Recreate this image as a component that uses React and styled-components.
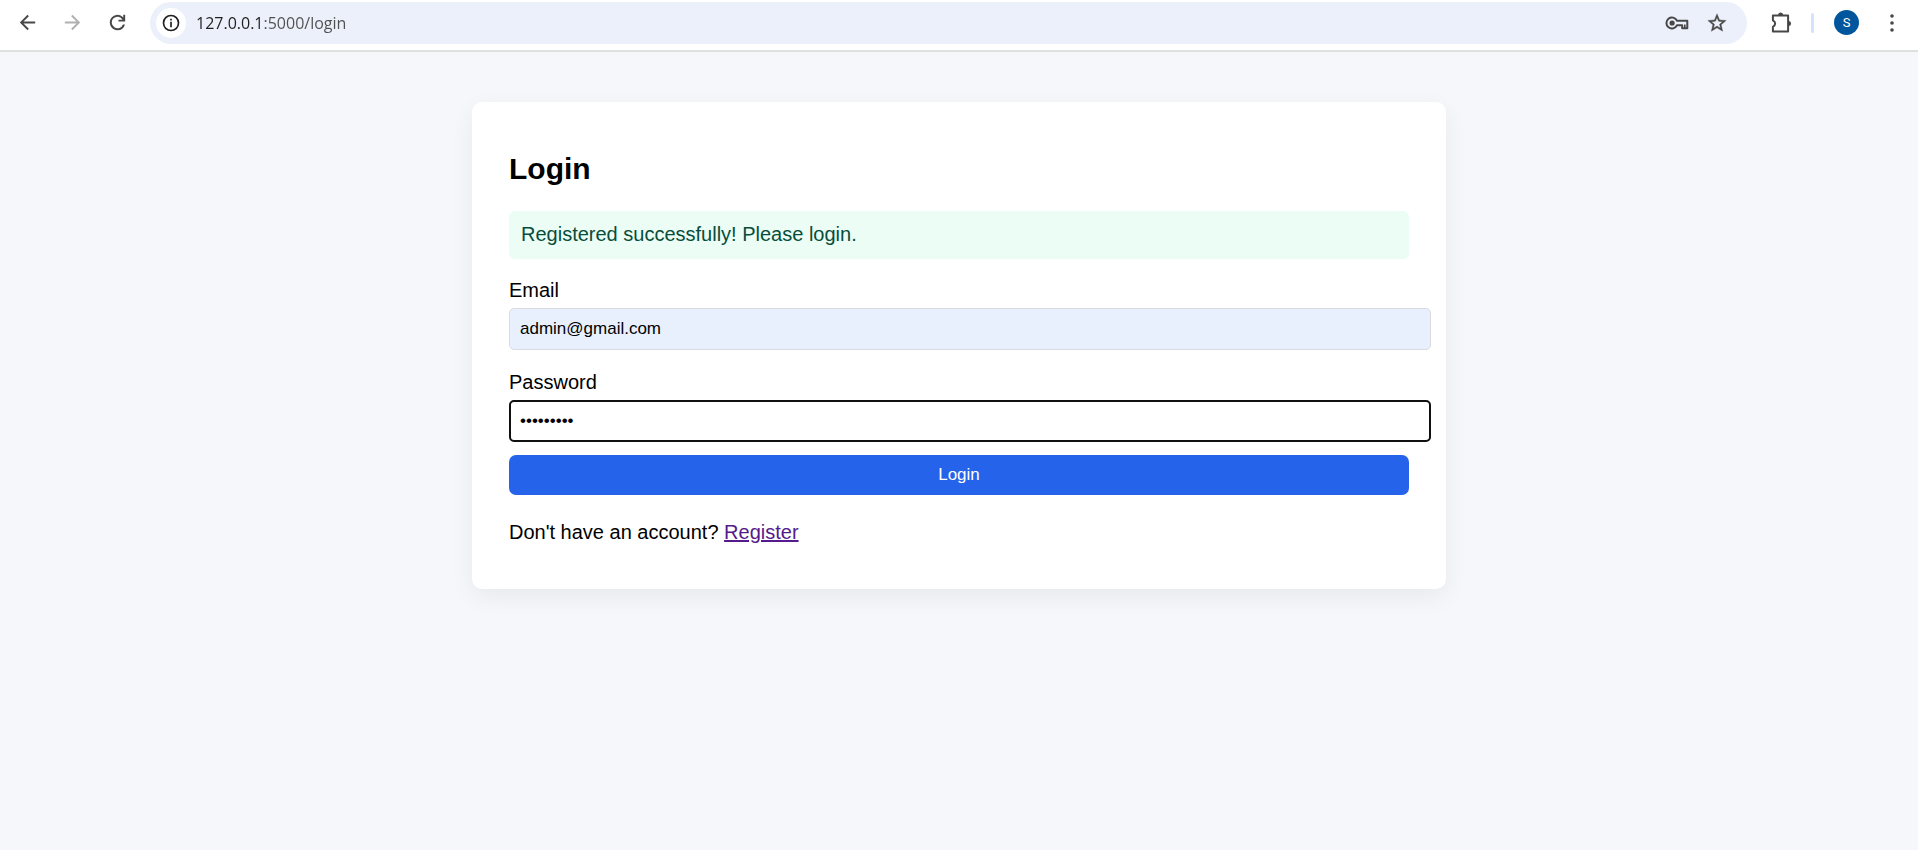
import React from "react";
import styled, { createGlobalStyle } from "styled-components";

const GlobalStyle = createGlobalStyle`
  body {
    margin: 0;
    background: #f5f7fb;
    color: #000;
    font-family: "Liberation Sans", Arial, sans-serif;
    font-size: 20px;
    line-height: 24px;
  }
`;

const Toolbar = styled.header`
  display: flex;
  align-items: center;
  height: 43px;
  padding: 1px 4px 6px 5px;
  border-bottom: 2px solid #dfe1de;
  background: #fff;
`;

const IconButton = styled.button`
  display: flex;
  flex: none;
  align-items: center;
  justify-content: center;
  width: ${({ $width }) => $width || 45}px;
  height: 40px;
  padding: 0;
  border: 0;
  background: none;
  color: ${({ $muted }) => ($muted ? "#b0b0b0" : "#474747")};
`;

const AddressBar = styled.div`
  display: flex;
  flex: 1;
  align-items: center;
  height: 42px;
  margin: 0 11px 0 10px;
  padding: 0 10px 0 6px;
  border-radius: 21px;
  background: #ecf0fa;
`;

const SiteInfo = styled.button`
  display: flex;
  align-items: center;
  justify-content: center;
  width: 30px;
  height: 30px;
  margin-right: 10px;
  padding: 0;
  border: 0;
  border-radius: 50%;
  background: #fff;
  color: #1f1f1f;
`;

const Address = styled.input`
  flex: 1;
  min-width: 0;
  padding: 0;
  border: 0;
  outline: 0;
  background: linear-gradient(to right, #1f1f1f 67px, #505050 67px);
  background-clip: text;
  color: transparent;
  font: 16px/30px "Open Sans", "Noto Sans", sans-serif;
`;

const Divider = styled.span`
  width: 3px;
  height: 20px;
  margin: 0 20px 0 8px;
  border-radius: 2px;
  background: #d3e3fd;
`;

const Avatar = styled.button`
  width: 25px;
  height: 25px;
  margin-right: 10px;
  padding: 0;
  border: 0;
  border-radius: 50%;
  background: #00569c;
  color: #fff;
  font: 13px/25px Roboto, sans-serif;
`;

const Card = styled.main`
  box-sizing: border-box;
  max-width: 974px;
  margin: 50px auto;
  padding: 25px 37px;
  border-radius: 10px;
  background: #fff;
  box-shadow: 0 8px 25px rgba(0, 0, 0, 0.06);
`;

const Title = styled.h2`
  margin: 25px 0;
  font-size: 30px;
  line-height: 34px;
`;

const Notice = styled.p`
  margin: 0 0 19px;
  padding: 11px 12px 13px;
  border-radius: 6px;
  background: #ecfdf5;
  color: #064e3b;
`;

const Field = styled.div`
  & + & {
    margin-top: 20px;
  }
`;

const Label = styled.label`
  display: block;
  margin-bottom: 6px;
`;

const TextInput = styled.input`
  display: block;
  width: 100%;
  height: 20px;
  padding: 10px;
  border: 1px solid #d8dbe2;
  border-radius: 5px;
  outline: ${({ $active }) => ($active ? "2px solid #101010" : "0")};
  outline-offset: -2px;
  background: ${({ $filled }) => ($filled ? "#e8f0fe" : "#fff")};
  color: #000;
  font: 17px/20px "Liberation Sans", Arial, sans-serif;
`;

const SubmitButton = styled.button`
  display: block;
  width: 100%;
  height: 40px;
  margin-top: 13px;
  padding: 0;
  border: 0;
  border-radius: 7px;
  background: #2563eb;
  color: #fff;
  font: 17px/20px "Liberation Sans", Arial, sans-serif;
`;

const Footnote = styled.p`
  margin: 25px 0 20px;
`;

const RegisterLink = styled.a`
  color: #551a8b;
`;

function Icon({ size = 23, children }) {
  return (
    <svg width={size} height={size} viewBox="0 0 24 24" fill="currentColor" aria-hidden="true">
      {children}
    </svg>
  );
}

function BrowserToolbar() {
  return (
    <Toolbar>
      <IconButton type="button" aria-label="Back">
        <Icon><path d="M20 11H7.83l5.59-5.59L12 4l-8 8 8 8 1.41-1.41L7.83 13H20z" /></Icon>
      </IconButton>
      <IconButton type="button" aria-label="Forward" $muted>
        <Icon><path d="M4 11h12.17l-5.59-5.59L12 4l8 8-8 8-1.41-1.41L16.17 13H4z" /></Icon>
      </IconButton>
      <IconButton type="button" aria-label="Reload">
        <Icon>
          <path d="M12 20a8 8 0 1 1 6-13.25V4h2v7h-7V9h4.2A6 6 0 1 0 17.66 14h2.1A8 8 0 0 1 12 20z" />
        </Icon>
      </IconButton>
      <AddressBar>
        <SiteInfo type="button" aria-label="View site information">
          <Icon size={20}>
            <path d="M11 10.5h2V17h-2zM11 7h2v2h-2zM12 2a10 10 0 1 0 0 20 10 10 0 0 0 0-20zm0 18a8 8 0 1 1 0-16 8 8 0 0 1 0 16z" />
          </Icon>
        </SiteInfo>
        <Address type="text" aria-label="Address" defaultValue="127.0.0.1:5000/login" spellCheck={false} />
        <IconButton type="button" aria-label="Manage passwords" $width={40}>
          <Icon size={24}>
            <path
              d="M11.9 9.7A5.5 5.5 0 1 0 11.9 14.3H17.2V17.2H22.3V9.7z"
              fill="none"
              stroke="currentColor"
              strokeWidth="2"
              strokeLinejoin="round"
            />
            <path d="M19 13.5h1.6V17H19z" />
            <circle cx="7.1" cy="12" r="2.6" />
          </Icon>
        </IconButton>
        <IconButton type="button" aria-label="Bookmark this tab" $width={40}>
          <Icon size={22}>
            <path
              d="M22 9.24l-7.19-.62L12 2 9.19 8.63 2 9.24l5.46 4.73L5.82 21 12 17.27 18.18 21l-1.63-7.03zM12 15.4l-3.76 2.27 1-4.28-3.32-2.88 4.38-.38L12 6.1l1.71 4.04 4.38.38-3.32 2.88 1 4.28z"
              stroke="currentColor"
              strokeWidth="0.4"
            />
          </Icon>
        </IconButton>
      </AddressBar>
      <IconButton type="button" aria-label="Extensions">
        <Icon size={24}>
          <path
            d="M3.9 4.6h15.2v15.8H3.9v-4.6c3-1.4 3-5 0-6.4z"
            fill="none"
            stroke="currentColor"
            strokeWidth="2"
            strokeLinejoin="round"
          />
          <path d="M9.2 4a2.5 2.5 0 0 1 5 0zM19.5 10a2.5 2.5 0 0 1 0 5z" />
        </Icon>
      </IconButton>
      <Divider />
      <Avatar type="button" aria-label="Profile S">S</Avatar>
      <IconButton type="button" aria-label="Browser menu">
        <Icon size={24}>
          <circle cx="12" cy="5" r="1.8" />
          <circle cx="12" cy="12" r="1.8" />
          <circle cx="12" cy="19" r="1.8" />
        </Icon>
      </IconButton>
    </Toolbar>
  );
}

export default function App() {
  return (
    <>
      <GlobalStyle />
      <BrowserToolbar />
      <Card>
        <Title>Login</Title>
        <Notice role="status">Registered successfully! Please login.</Notice>
        <form onSubmit={(event) => event.preventDefault()}>
          <Field>
            <Label htmlFor="email">Email</Label>
            <TextInput id="email" type="email" defaultValue="admin@gmail.com" $filled />
          </Field>
          <Field>
            <Label htmlFor="password">Password</Label>
            <TextInput id="password" type="password" defaultValue="admin1234" $active />
          </Field>
          <SubmitButton type="submit">Login</SubmitButton>
        </form>
        <Footnote>
          Don't have an account? <RegisterLink href="#register">Register</RegisterLink>
        </Footnote>
      </Card>
    </>
  );
}
